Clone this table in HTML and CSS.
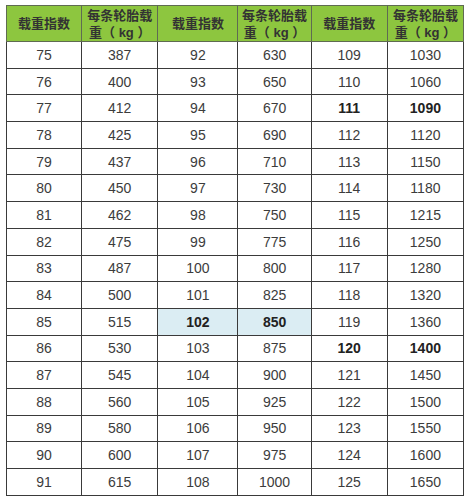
FILE: index.html
```html
<!DOCTYPE html>
<html lang="zh">
<head>
<meta charset="utf-8">
<title>载重指数表</title>
<link rel="stylesheet" href="styles.css">
</head>
<body>
<table class="load-table">
  <colgroup>
    <col class="c1"><col class="c2"><col class="c3"><col class="c4"><col class="c5"><col class="c6">
  </colgroup>
  <thead>
    <tr>
      <th>载重指数</th><th>每条轮胎载<br>重（ kg ）</th>
      <th>载重指数</th><th>每条轮胎载<br>重（ kg ）</th>
      <th>载重指数</th><th>每条轮胎载<br>重（ kg ）</th>
    </tr>
  </thead>
  <tbody>
    <tr><td>75</td><td>387</td><td>92</td><td>630</td><td>109</td><td>1030</td></tr>
    <tr><td>76</td><td>400</td><td>93</td><td>650</td><td>110</td><td>1060</td></tr>
    <tr><td>77</td><td>412</td><td>94</td><td>670</td><td class="b">111</td><td class="b">1090</td></tr>
    <tr><td>78</td><td>425</td><td>95</td><td>690</td><td>112</td><td>1120</td></tr>
    <tr><td>79</td><td>437</td><td>96</td><td>710</td><td>113</td><td>1150</td></tr>
    <tr><td>80</td><td>450</td><td>97</td><td>730</td><td>114</td><td>1180</td></tr>
    <tr><td>81</td><td>462</td><td>98</td><td>750</td><td>115</td><td>1215</td></tr>
    <tr><td>82</td><td>475</td><td>99</td><td>775</td><td>116</td><td>1250</td></tr>
    <tr><td>83</td><td>487</td><td>100</td><td>800</td><td>117</td><td>1280</td></tr>
    <tr><td>84</td><td>500</td><td>101</td><td>825</td><td>118</td><td>1320</td></tr>
    <tr><td>85</td><td>515</td><td class="b hl">102</td><td class="b hl">850</td><td>119</td><td>1360</td></tr>
    <tr><td>86</td><td>530</td><td>103</td><td>875</td><td class="b">120</td><td class="b">1400</td></tr>
    <tr><td>87</td><td>545</td><td>104</td><td>900</td><td>121</td><td>1450</td></tr>
    <tr><td>88</td><td>560</td><td>105</td><td>925</td><td>122</td><td>1500</td></tr>
    <tr><td>89</td><td>580</td><td>106</td><td>950</td><td>123</td><td>1550</td></tr>
    <tr><td>90</td><td>600</td><td>107</td><td>975</td><td>124</td><td>1600</td></tr>
    <tr><td>91</td><td>615</td><td>108</td><td>1000</td><td>125</td><td>1650</td></tr>
  </tbody>
</table>
</body>
</html>
```
FILE: styles.css
```css
html, body {
  margin: 0;
  padding: 0;
  background: #ffffff;
}
body {
  padding: 5px 0 0 6px;
  font-family: "Liberation Sans", Arial, "Noto Sans CJK SC", sans-serif;
  color: #333333;
}
.load-table {
  border-collapse: collapse;
  table-layout: fixed;
  width: 458px;
}
.c1 { width: 75px; }
.c2 { width: 76px; }
.c3 { width: 80px; }
.c4 { width: 73px; }
.c5 { width: 76px; }
.c6 { width: 76px; }
.load-table th,
.load-table td {
  border: 1px solid #3a3a3a;
  padding: 0;
  text-align: center;
  vertical-align: middle;
}
.load-table th {
  background: #8dc63f;
  height: 35px;
  font-family: "Liberation Sans", "Noto Sans CJK SC", sans-serif;
  font-size: 13px;
  font-weight: bold;
  line-height: 17px;
  color: #333333;
  border-color: #5f6b52;
}
.load-table td {
  height: 25.7px;
  font-size: 14px;
  line-height: 16px;
  color: #3c3c3c;
}
.load-table td.b {
  font-weight: bold;
  color: #222222;
}
.load-table td.hl {
  background: #dbedf3;
}
```
